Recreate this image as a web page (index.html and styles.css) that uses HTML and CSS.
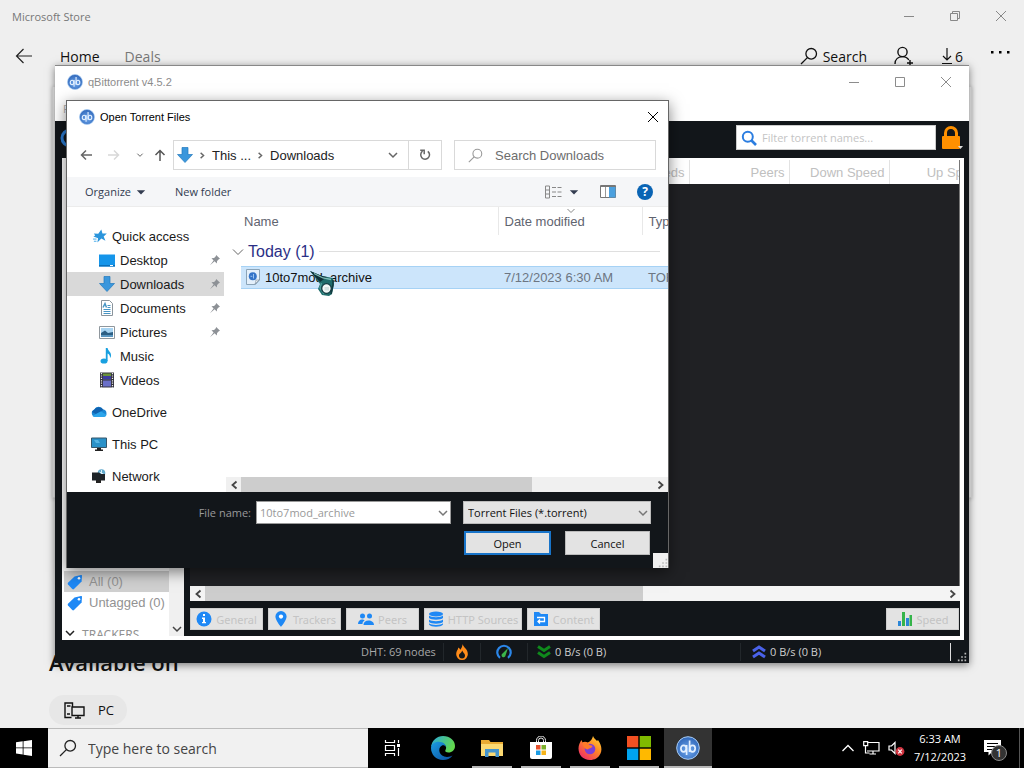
FILE: index.html
```html
<!DOCTYPE html>
<html lang="en">
<head>
<meta charset="utf-8">
<title>Open Torrent Files</title>
<link rel="stylesheet" href="styles.css">
</head>
<body>
<svg class="defs" aria-hidden="true">
  <defs>
    <radialGradient id="qbg" cx="50%" cy="60%" r="60%"><stop offset="0" stop-color="#6fa8ee"/><stop offset="1" stop-color="#2f66b8"/></radialGradient>
    <symbol id="qb" viewBox="0 0 24 24">
      <circle cx="12" cy="12" r="11.3" fill="url(#qbg)" stroke="#a9cdf5" stroke-width="1"/>
      <g fill="none" stroke="#e3f0ff" stroke-width="1.7"><ellipse cx="7.6" cy="12.6" rx="2.7" ry="3.3"/><path d="M10.6 9v10M13.6 4.6V16"/><ellipse cx="16.5" cy="12.6" rx="2.7" ry="3.3"/></g>
    </symbol>
    <symbol id="close" viewBox="0 0 12 12"><path d="M1 1l10 10M11 1L1 11" fill="none" stroke="currentColor"/></symbol>
    <symbol id="min" viewBox="0 0 12 12"><path d="M1 6.5h10" fill="none" stroke="currentColor"/></symbol>
    <symbol id="max" viewBox="0 0 12 12"><path d="M1.500 1.500h9v9h-9z" fill="none" stroke="currentColor"/></symbol>
    <symbol id="restore" viewBox="0 0 12 12"><path d="M1.500 3.500h7v7h-7zM3.500 3.500v-2h7v7h-2" fill="none" stroke="currentColor"/></symbol>
    <symbol id="glass" viewBox="0 0 18 18"><g fill="none" stroke="currentColor" stroke-width="1.300"><circle cx="11.200" cy="6.800" r="5.300"/><path d="M7.400 10.600L1 17"/></g></symbol>
    <symbol id="cdown" viewBox="0 0 12 12"><path d="M2 4l4 4 4-4" fill="none" stroke="currentColor" stroke-width="1.500"/></symbol>
    <symbol id="cleft" viewBox="0 0 12 12"><path d="M8.500 2.500L4.500 6l4 3.500" fill="none" stroke="currentColor" stroke-width="1.800"/></symbol>
    <symbol id="cright" viewBox="0 0 12 12"><path d="M3.500 2.500l4 3.500-4 3.500" fill="none" stroke="currentColor" stroke-width="1.800"/></symbol>
    <symbol id="tri" viewBox="0 0 12 12"><path d="M1 4h10l-5 5z" fill="currentColor"/></symbol>
    <symbol id="pin" viewBox="0 0 12 12"><path d="M7.200 1l3.800 3.800-1.200.4-1.700 1.700-.3 2.600L5.600 7.300 1 11.300 4.600 6.400 2.500 4.200l2.600-.3 1.700-1.700z" fill="#8d9196"/></symbol>
    <symbol id="dl" viewBox="0 0 16 16"><path d="M5 .5h6v7h4.500L8 15.500.5 7.500H5z" fill="#3b97dc" stroke="#2179bd" stroke-width=".7"/></symbol>
    <symbol id="tag" viewBox="0 0 16 16"><path d="M7.500 2.500L14 1c.8 0 1 .4 1 1l-.4 5.500L7 15c-.6.5-1.200.5-1.700 0L1 10.500c-.5-.6-.5-1.200 0-1.800z" fill="#1e88f5"/><circle cx="12" cy="4.300" r="1.300" fill="#fff"/></symbol>
    <symbol id="grip" viewBox="0 0 12 12"><path d="M9 1h2v2H9zM9 5h2v2H9zM5 5h2v2H5zM9 9h2v2H9zM5 9h2v2H5zM1 9h2v2H1z" fill="currentColor"/></symbol>
  </defs>
</svg>

<main class="desktop">
  <section class="store">
    <header class="store-title">
      <span class="store-name">Microsoft Store</span>
      <div class="store-controls">
        <button aria-label="Minimize Store"><svg class="i12"><use href="#min"/></svg></button>
        <button aria-label="Restore Store"><svg class="i12"><use href="#restore"/></svg></button>
        <button aria-label="Close Store"><svg class="i12"><use href="#close"/></svg></button>
      </div>
    </header>
    <nav class="store-nav">
      <button class="back" aria-label="Back"><svg width="18" height="16" viewBox="0 0 18 16"><path d="M8.500 1L1.500 8l7 7M1.500 8H17" fill="none" stroke="#222" stroke-width="1.200"/></svg></button>
      <a href="#home" class="current">Home</a>
      <a href="#deals">Deals</a>
      <div class="store-tools">
        <button class="tool"><svg width="18" height="18"><use href="#glass"/></svg>Search</button>
        <button class="tool" aria-label="Account"><svg width="20" height="20" viewBox="0 0 20 20"><g fill="none" stroke="#111" stroke-width="1.400"><circle cx="8.500" cy="6" r="4.600"/><path d="M1 18c0-5 3.500-7.400 7.500-7.400 2.800 0 5 1.200 6.300 3.400M16 14v6M13 17h6"/></g></svg></button>
        <button class="tool tight"><svg width="12" height="18" viewBox="0 0 12 18"><path d="M6 1v12M2 9l4 4 4-4M1 16.500h10" fill="none" stroke="#111" stroke-width="1.200"/></svg>6</button>
        <button class="tool more" aria-label="More"><svg width="20" height="6" viewBox="0 0 20 6"><path d="M1 2h2.500v2.500H1zM9 2h2.500v2.500H9zM17 2h2.500v2.500H17z"/></svg></button>
      </div>
    </nav>
    <div class="store-card"></div>
    <h2 class="available">Available on</h2>
    <span class="pill"><svg width="21" height="17" viewBox="0 0 21 17"><g fill="none" stroke="#111" stroke-width="1.400"><path d="M7.500 15.500H1V1h7.500v4M3 4h3.500M3 12h3M8 5h12v8.500H8zM14 13.500V16M11 16h6"/></g></svg>PC</span>
  </section>

  <section class="qb-window" aria-label="qBittorrent">
    <header class="qb-title">
      <svg width="16" height="16"><use href="#qb"/></svg>
      <span>qBittorrent v4.5.2</span>
      <div class="qb-controls">
        <button aria-label="Minimize"><svg class="i12"><use href="#min"/></svg></button>
        <button aria-label="Maximize"><svg class="i12"><use href="#max"/></svg></button>
        <button aria-label="Close qBittorrent"><svg class="i12"><use href="#close"/></svg></button>
      </div>
    </header>
    <div class="qb-menu">File</div>
    <div class="qb-toolbar">
      <svg width="20" height="20" viewBox="0 0 20 20"><circle cx="10" cy="10" r="8" fill="none" stroke="#2b7cd3" stroke-width="3"/></svg>
      <label class="filter"><svg width="16" height="16" viewBox="0 0 16 16"><g fill="none" stroke="#2b7de0"><circle cx="6.800" cy="6.800" r="5" stroke-width="2"/><path d="M10.500 10.500L15 15" stroke-width="2.600"/></g></svg><input type="text" placeholder="Filter torrent names..." aria-label="Filter torrent names"></label>
      <button class="lock" aria-label="Lock"><svg width="22" height="24" viewBox="0 0 22 24"><path d="M4.500 11V7a5.500 5.500 0 0 1 11 0v4" fill="none" stroke="#ff9000" stroke-width="3"/><rect x="1" y="10" width="18" height="13" rx="1" fill="#ff9000"/><path d="M17 20h5l-2.500 3z" fill="#ddd"/></svg></button>
    </div>
    <div class="qb-body">
      <aside class="qb-side">
        <div class="qb-tags">
          <div class="tag on"><svg width="16" height="16"><use href="#tag"/></svg>All (0)</div>
          <div class="tag"><svg width="16" height="16"><use href="#tag"/></svg>Untagged (0)</div>
          <div class="trackers"><svg width="12" height="12"><use href="#cdown"/></svg>TRACKERS</div>
        </div>
        <div class="vbar"><svg width="12" height="12"><use href="#cdown"/></svg></div>
      </aside>
      <div class="qb-main">
        <div class="torrents">
          <table>
            <colgroup><col class="c-name"><col class="c-n"><col class="c-n"><col class="c-n"><col class="c-n"></colgroup>
            <thead><tr><th></th><th>Seeds</th><th>Peers</th><th>Down Speed</th><th>Up Speed</th></tr></thead>
          </table>
        </div>
        <div class="hbar qb-hbar"><span class="cap"><svg width="12" height="12"><use href="#cleft"/></svg></span><span class="thumb"></span><span class="track"></span><span class="cap"><svg width="12" height="12"><use href="#cright"/></svg></span></div>
        <div class="tabs">
          <button class="tab"><svg width="16" height="16" viewBox="0 0 16 16"><circle cx="8" cy="8" r="7.500" fill="#1e88f5"/><path d="M7 3h2v2H7zM6 6.500h3V11h1v1.300H6V11h1V8H6z" fill="#fff"/></svg>General</button>
          <button class="tab"><svg width="16" height="16" viewBox="0 0 16 16"><path d="M8 0a5.600 5.600 0 0 1 5.600 5.600C13.600 9.500 8 16 8 16S2.400 9.500 2.400 5.600A5.600 5.600 0 0 1 8 0z" fill="#1e88f5"/><circle cx="8" cy="5.600" r="2.100" fill="#fff"/></svg>Trackers</button>
          <button class="tab"><svg width="16" height="16" viewBox="0 0 16 16"><g fill="#1e88f5"><circle cx="4.500" cy="5" r="2.500"/><circle cx="11.500" cy="5" r="2.500"/><path d="M0 13c0-3 2-4.500 4-4.500 1.200 0 2 .4 2.600 1C5 10.500 4.500 11.500 4.500 13zM5.500 14c0-3 2-4.500 5-4.500s5.500 1.500 5.500 4.500z"/></g></svg>Peers</button>
          <button class="tab wide"><svg width="16" height="16" viewBox="0 0 16 16"><g fill="#1e88f5"><ellipse cx="8" cy="3" rx="7" ry="2.600"/><path d="M1 4.500c2 2.200 12 2.200 14 0v2.500c-2 2.200-12 2.200-14 0zM1 8.500c2 2.200 12 2.200 14 0V11c-2 2.200-12 2.200-14 0zM1 12.300c2 2.200 12 2.200 14 0v1.200c-2 3-12 3-14 0z"/></g></svg>HTTP Sources</button>
          <button class="tab"><svg width="16" height="16" viewBox="0 0 16 16"><path d="M1 1h5l2 2h7v12H1z" fill="#1e88f5"/><path d="M4 6.500h7.500v4H5M7 8.500l-2 2 2 2" fill="none" stroke="#fff" stroke-width="1.300"/></svg>Content</button>
          <button class="tab speed"><svg width="16" height="16" viewBox="0 0 16 16"><path d="M1 10h3v5H1zM9 7h3v8H9z" fill="#2b86d8"/><path d="M5 1h3v14H5zM12.500 4H15v11h-2.500z" fill="#35b44a"/></svg>Speed</button>
        </div>
      </div>
    </div>
    <footer class="qb-status">
      <span class="dht">DHT: 69 nodes</span>
      <span class="cell"><svg width="16" height="16" viewBox="0 0 16 16"><path d="M8.500 0c.5 3 5.300 5 5.300 9.700A5.800 5.800 0 0 1 8 16a5.800 5.800 0 0 1-5.800-6.200C2.200 7 4 6 4.300 3.500c1 .5 1.700 1.300 2 2.300C7.500 4 8.500 2.500 8.500 0z" fill="#ff8c1a"/><path d="M8.300 6.500c.3 2 2.700 2.700 2.700 5a3 3 0 0 1-6 0c0-2 2.500-2.500 3.300-5z" fill="#14181b"/></svg></span>
      <span class="cell"><svg width="16" height="16" viewBox="0 0 16 16"><path d="M4 13.800A6.700 6.700 0 1 1 12 13.800" fill="none" stroke="#2b86e8" stroke-width="2.200"/><path d="M12 4L9.500 11.500a2 2 0 1 1-3-2z" fill="#3cb54a"/></svg></span>
      <span class="cell down"><svg width="14" height="16" viewBox="0 0 14 16"><path d="M1 2.500l6 4 6-4M1 8.500l6 4 6-4" fill="none" stroke="#0f8a1c" stroke-width="3"/></svg>0 B/s (0 B)</span>
      <span class="cell up"><svg width="14" height="16" viewBox="0 0 14 16"><path d="M1 7l6-4 6 4M1 13l6-4 6 4" fill="none" stroke="#4a62ea" stroke-width="3"/></svg>0 B/s (0 B)</span>
      <svg class="qb-grip" width="10" height="10"><use href="#grip"/></svg>
    </footer>
  </section>

  <section class="dialog" role="dialog" aria-label="Open Torrent Files">
    <header class="dlg-title">
      <svg width="16" height="16"><use href="#qb"/></svg>
      <span>Open Torrent Files</span>
      <button aria-label="Close"><svg class="i12"><use href="#close"/></svg></button>
    </header>
    <div class="address">
      <div class="history">
        <button aria-label="Back"><svg width="12" height="12" viewBox="0 0 12 12"><path d="M6 1.500L1.500 6 6 10.500M1.500 6H12" fill="none" stroke="#666" stroke-width="1.500"/></svg></button>
        <button aria-label="Forward"><svg width="12" height="12" viewBox="0 0 12 12"><path d="M6 1.500L10.500 6 6 10.500M10.500 6H0" fill="none" stroke="#d8d8d8" stroke-width="1.500"/></svg></button>
        <button aria-label="Recent"><svg width="8" height="8"><use href="#cdown" color="#666"/></svg></button>
        <button aria-label="Up"><svg width="12" height="12" viewBox="0 0 12 12"><path d="M1.500 6L6 1.500 10.500 6M6 1.500V12" fill="none" stroke="#555" stroke-width="1.500"/></svg></button>
      </div>
      <div class="crumbs">
        <svg width="16" height="16"><use href="#dl"/></svg>
        <svg width="9" height="9"><use href="#cright"/></svg>
        <a href="#pc">This ...</a>
        <svg width="9" height="9"><use href="#cright"/></svg>
        <a href="#downloads">Downloads</a>
        <button class="crumb-open" aria-label="Previous locations"><svg width="12" height="12"><use href="#cdown"/></svg></button>
      </div>
      <button class="refresh" aria-label="Refresh"><svg width="12" height="12" viewBox="0 0 12 12"><path d="M8.800 2.300A4.400 4.400 0 1 1 3.600 2.200" fill="none" stroke="#666" stroke-width="1.500"/><path d="M1.200 1.300h4v4" fill="none" stroke="#666" stroke-width="1.500"/></svg></button>
      <label class="dlg-search"><svg width="15" height="15"><use href="#glass"/></svg><input type="text" placeholder="Search Downloads" aria-label="Search Downloads"></label>
    </div>
    <div class="commands">
      <button>Organize<svg width="10" height="10"><use href="#tri"/></svg></button>
      <button>New folder</button>
      <div class="views">
        <button aria-label="Change view"><svg width="18" height="14" viewBox="0 0 18 14"><path d="M1.500 1v12h4V1zM1.500 5h4M1.500 9h4" fill="none" stroke="#888"/><path d="M8 2.500h4M8 7h4M8 11.500h4M13.500 2.500h4M13.500 7h4M13.500 11.500h4" stroke="#888"/></svg><svg width="10" height="10"><use href="#tri"/></svg></button>
        <button aria-label="Preview pane"><svg width="16" height="13" viewBox="0 0 16 13"><path d="M.5.500h15v12H.5z" fill="#fff" stroke="#777"/><path d="M.5 1.500h15" stroke="#777"/><path d="M5.500 2v10" stroke="#999"/><path d="M9 2h6.500v10.500H9z" fill="#4ba0de"/></svg></button>
        <button class="help" aria-label="Help">?</button>
      </div>
    </div>
    <div class="browse">
      <nav class="places">
        <a href="#q" class="root"><svg width="14" height="14" viewBox="0 0 16 16"><path d="M9.500.5l1.300 4.700 5-.2-3.600 3.500 2 5-4.700-2.600L5 15.500l.8-5L.5 8.500l2-1-1.500-2.500 5 .5z" fill="#2b95dc"/><path d="M0 11.500h4M1 14h3" stroke="#35a3e8"/></svg>Quick access</a>
        <a href="#q1"><svg width="16" height="13" viewBox="0 0 16 13"><path d="M0 .5h16v12H0z" fill="#1595ea"/><path d="M0 11h16v1.500H0z" fill="#0b6fb8"/><path d="M11 11.500h3" stroke="#fff"/></svg>Desktop<svg class="pin" width="12" height="12"><use href="#pin"/></svg></a>
        <a href="#q2" class="selected"><svg width="16" height="16"><use href="#dl"/></svg>Downloads<svg class="pin" width="12" height="12"><use href="#pin"/></svg></a>
        <a href="#q3"><svg width="16" height="16" viewBox="0 0 16 16"><path d="M2.500.500h8l3 3v12h-11z" fill="#fff" stroke="#8a949c"/><path d="M4.500 9.500h7M4.500 11.500h7M4.500 13.500h7M8.500 5.500h3M8.500 7.500h3" stroke="#4694c4"/><path d="M4 7.500l2-4 1.500 4" fill="none" stroke="#4694c4" stroke-width="1.500"/></svg>Documents<svg class="pin" width="12" height="12"><use href="#pin"/></svg></a>
        <a href="#q4"><svg width="16" height="13" viewBox="0 0 16 13"><path d="M.5.500h15v12H.5z" fill="#fff" stroke="#8f979d"/><path d="M2 2h12v5H2z" fill="#a8d4f2"/><path d="M2 7l4-2.500L9 7l5-1v5H2z" fill="#2c5f84"/><path d="M2 9h12v2H2z" fill="#5a96c0"/></svg>Pictures<svg class="pin" width="12" height="12"><use href="#pin"/></svg></a>
        <a href="#q5"><svg width="16" height="16" viewBox="0 0 16 16"><ellipse cx="5" cy="13" rx="3.500" ry="2.600" fill="#18a0e0"/><path d="M6.800 0h1.800c.3 3 4 4 3.400 8-.2 1.300-1 2-1 2s.5-3.400-2.400-4.500V13H6.800z" fill="#18a0e0"/></svg>Music</a>
        <a href="#q6"><svg width="16" height="16" viewBox="0 0 16 16"><path d="M1 .5h14v15H1z" fill="#33323d"/><path d="M4 1.500h8v6H4z" fill="#69913a"/><path d="M4 4h8v3.500H4z" fill="#3c3aa0"/><path d="M4 8.500h8v6H4z" fill="#6a6fc8"/><path d="M2.500 1v15M13.500 1v15" stroke="#eee" stroke-width="1.200" stroke-dasharray="1.200 1.200"/></svg>Videos</a>
        <a href="#q7" class="root gap"><svg width="16" height="16" viewBox="0 0 16 16"><path d="M4 13a4 4 0 0 1-.8-7.600A5 5 0 0 1 12 5.500a3.800 3.800 0 0 1 .5 7.500z" fill="#1a86d4"/><path d="M3.500 5.500A5 5 0 0 1 12 5.500l.8.300L5 10 .8 8z" fill="#0f62b0"/><path d="M5 10l5-2.500 5.600 3.200A3.400 3.400 0 0 1 12.500 13H4a4 4 0 0 1-2.500-1z" fill="#2ba4ea"/></svg>OneDrive</a>
        <a href="#q8" class="root gap"><svg width="16" height="14" viewBox="0 0 16 14"><path d="M.5 1h15v9.500H.5z" fill="#2a91c8" stroke="#35566a"/><path d="M6 11h4v1.500h2V14H4v-1.500h2z" fill="#222"/><path d="M3 3h4l2 3H5z" fill="#56b4e2"/></svg>This PC</a>
        <a href="#q9" class="root gap"><svg width="16" height="14" viewBox="0 0 16 14"><circle cx="10.500" cy="4" r="3.800" fill="#62aacd"/><path d="M8.500 3l4 2M10.500 1v5" stroke="#d8eef8"/><path d="M1 3.500h7l2 1.500h4v6.500H1z" fill="#1e2328"/><path d="M5 11h5v3H5z" fill="#222"/></svg>Network</a>
      </nav>
      <div class="files">
        <table>
          <colgroup><col class="f-pad"><col class="f-name"><col class="f-date"><col></colgroup>
          <thead><tr><th></th><th>Name</th><th><svg class="sort" width="10" height="6" viewBox="0 0 10 6"><path d="M1.500 1L5 4.500 8.500 1" fill="none" stroke="#888"/></svg>Date modified</th><th>Type</th></tr></thead>
          <tbody>
            <tr><th colspan="4" class="group"><div><svg width="12" height="12" viewBox="0 0 12 12"><path d="M1 3.500L6 8.500l5-5" fill="none" stroke="#666"/></svg>Today (1)<i></i></div></th></tr>
            <tr class="file"><td></td><td><div><svg width="16" height="16" viewBox="0 0 16 16"><path d="M1.500.500h13v10.500l-4 4.500h-9z" fill="#e4f0fb" stroke="#8ba4b8"/><path d="M14.500 10.500c-1 .8-2.600.6-3.500.5 0 1.500-.5 3-1 4z" fill="#fff" stroke="#7e91a0" stroke-width=".7"/><circle cx="7.800" cy="7.300" r="4" fill="#3474c8"/><path d="M5.500 7.300h1.800M8.500 5v4.500" stroke="#9cc4f0"/></svg>10to7mod_archive</div></td><td>7/12/2023 6:30 AM</td><td>TORRENT File</td></tr>
          </tbody>
        </table>
        <div class="hbar"><span class="cap"><svg width="12" height="12"><use href="#cleft"/></svg></span><span class="thumb"></span><span class="track"></span><span class="cap"><svg width="12" height="12"><use href="#cright"/></svg></span></div>
      </div>
    </div>
    <footer class="dlg-footer">
      <label for="fname">File name:</label>
      <div class="combo"><input id="fname" type="text" value="10to7mod_archive"><svg width="12" height="12"><use href="#cdown"/></svg></div>
      <div class="choice"><select aria-label="File type"><option>Torrent Files (*.torrent)</option></select><svg width="12" height="12"><use href="#cdown"/></svg></div>
      <div class="actions"><button class="primary">Open</button><button>Cancel</button></div>
      <span class="dlg-grip"><svg width="10" height="10"><use href="#grip"/></svg></span>
    </footer>
  </section>

  <svg class="pointer" width="28" height="28" viewBox="0 0 28 28" aria-hidden="true">
    <path d="M1 1l12 5 11 2 1 6-2 10-3 2-7-1-4-6 2-5z" fill="#1f6c6b"/>
    <path d="M1 1l12 5 5 1-7 5z" fill="#0f2f36"/>
    <path d="M5 3.500l9 4.500 8 1.500" fill="none" stroke="#7fbdb7" stroke-width="1.300"/>
    <path d="M12.500 13l-1.500 5 4 6" fill="none" stroke="#4a9b98" stroke-width="1.500"/>
    <path d="M24 10v5l-2 9" fill="none" stroke="#123a40" stroke-width="1.500"/>
    <circle cx="17.500" cy="18.500" r="4.800" fill="#f3f8f7" stroke="#123a40" stroke-width="1.300"/>
    <path d="M15.500 17h4.500v3.500h-4.500z" fill="#d3e2e0"/>
  </svg>

  <footer class="taskbar">
    <button class="start" aria-label="Start"><svg width="16" height="16" viewBox="0 0 16 16"><path d="M0 2.300l6.700-1v6.200H0zM7.500 1.200L16 0v7.500H7.500zM0 8.300h6.700v6.300l-6.700-1zM7.500 8.300H16V16l-8.500-1.200z" fill="#fff"/></svg></button>
    <label class="task-search"><svg width="18" height="18"><use href="#glass"/></svg><input type="text" placeholder="Type here to search" aria-label="Type here to search"></label>
    <div class="apps">
      <button class="view" aria-label="Task view"><svg width="17" height="16" viewBox="0 0 17 16"><path d="M1.500 0v2.500h9V0M1.500 5.500h9v5h-9zM1.500 16v-2.500h9V16M14.500 0v3M14.500 8v8" fill="none" stroke="#fff" stroke-width="1.200"/><path d="M13 4h3v3h-3z" fill="#fff"/></svg></button>
      <button aria-label="Edge"><svg width="24" height="24" viewBox="0 0 24 24"><defs><linearGradient id="e1" x1="0" y1="0" x2="1" y2=".4"><stop offset="0" stop-color="#28a8e0"/><stop offset="1" stop-color="#62d84e"/></linearGradient><linearGradient id="e2" x1="0" y1="0" x2="1" y2="1"><stop offset="0" stop-color="#1b9de2"/><stop offset="1" stop-color="#0c4fa0"/></linearGradient></defs><path d="M0 11C1 4 6 0 12 0c7 0 12 4.500 12 10 0 4-3 6.500-6.500 6.500-2.500 0-4-1-3-2.500 1.500-2.500.5-6-4-6C5.500 8 1 9 0 11z" fill="url(#e1)"/><path d="M0 12c0-4 3.500-6.300 7.500-6.300 5 0 7.500 2.800 7.500 5.300-1-2-3-2-4-1.500-5 2.500-3 11.500 5 11.500 2.500 0 4-.8 5.500-1.500C19.500 22.500 16 24 12 24 5 24 0 18.500 0 12z" fill="url(#e2)"/></svg></button>
      <button class="open" aria-label="File Explorer"><svg width="22" height="19" viewBox="0 0 22 19"><path d="M0 1h8l1.500 2H22v14H0z" fill="#e9ab33"/><path d="M0 5h22v12H0z" fill="#fbd972"/><path d="M4 10h14v8h-3.500v-4.500h-7V18H4z" fill="#4494cd"/></svg></button>
      <button class="open" aria-label="Microsoft Store"><svg width="24" height="24" viewBox="0 0 24 24"><path d="M7.500 7V4.500a4.500 4.500 0 0 1 9 0V7M9.500 7V4.500a2.500 2.500 0 0 1 5 0V7" fill="none" stroke="#eee"/><path d="M1 6h22v15a2 2 0 0 1-2 2H3a2 2 0 0 1-2-2z" fill="#fff"/><path d="M7 9h4.500v4.500H7z" fill="#e8502c"/><path d="M12.500 9H17v4.500h-4.500z" fill="#7cb02c"/><path d="M7 14.500h4.500V19H7z" fill="#1c9ce4"/><path d="M12.500 14.500H17V19h-4.500z" fill="#f6b41a"/></svg></button>
      <button class="open" aria-label="Firefox"><svg width="24" height="24" viewBox="0 0 24 24"><defs><linearGradient id="ff" x1="1" y1="0" x2=".2" y2="1"><stop offset="0" stop-color="#ffe03c"/><stop offset=".45" stop-color="#ff8a24"/><stop offset="1" stop-color="#ef2a68"/></linearGradient></defs><path d="M15 0c1 3 3 3.500 4 5l1-1c3 4 4.500 9 2.500 13.500C20.500 22 16.500 24 12 24 5 24 .5 19 .5 12.500.5 9 2 6 3.500 4l1 2.500C6 5.500 8 5.500 9.500 6.500 11 6 14 4.500 15 0z" fill="url(#ff)"/><circle cx="12" cy="13" r="5.300" fill="#7b3fd6"/><path d="M4.500 6.500C8 5 10 7 11.500 9c1.500.5 3 .5 3 1.500-1 2-4 1.500-4.500 3-3 0-5-3-5.500-7z" fill="#ff7a2a"/></svg></button>
      <button class="open" aria-label="Microsoft"><svg width="24" height="24" viewBox="0 0 24 24"><path d="M0 0h11.300v11.300H0z" fill="#f25022"/><path d="M12.700 0H24v11.300H12.700z" fill="#7fba00"/><path d="M0 12.700h11.300V24H0z" fill="#00a4ef"/><path d="M12.700 12.700H24V24H12.700z" fill="#ffb900"/></svg></button>
      <button class="open active" aria-label="qBittorrent"><svg width="24" height="24"><use href="#qb"/></svg></button>
    </div>
    <div class="tray">
      <svg width="14" height="10" viewBox="0 0 14 10"><path d="M1.500 8L7 2.500 12.500 8" fill="none" stroke="#fff" stroke-width="1.300"/></svg>
      <svg width="17" height="14" viewBox="0 0 17 14"><path d="M4 1.500h12v8.500H4M10 10v3M6.500 13H13M2.500 5v7h4" fill="none" stroke="#fff" stroke-width="1.200"/><path d="M.7.700h4v4h-4z" fill="#000" stroke="#fff" stroke-width="1.200"/></svg>
      <svg width="17" height="15" viewBox="0 0 17 15"><path d="M1 5h2.500L7 1.500v11L3.500 9H1z" fill="none" stroke="#fff" stroke-width="1.200"/><circle cx="12" cy="10.500" r="4.400" fill="#d13440"/><path d="M10.200 8.700l3.600 3.600M13.800 8.700l-3.600 3.600" stroke="#fff" stroke-width="1.200"/></svg>
      <div class="clock"><time>6:33 AM</time><time>7/12/2023</time></div>
      <div class="notes"><svg width="17" height="16" viewBox="0 0 17 16"><path d="M0 0h17v12H8l-3.500 3.500V12H0z" fill="#fff"/><path d="M3 3.500h11M3 6.500h11M3 9.500h7" stroke="#000"/></svg><b>1</b></div>
      <i class="peek"></i>
    </div>
  </footer>
</main>
</body>
</html>
```

FILE: styles.css
```css
* { box-sizing: border-box; }
body { margin: 0; font-family: "Open Sans", "Noto Sans", sans-serif; color: #111; }
svg { display: block; flex: none; }
button, input, select { font: inherit; color: inherit; border: 0; padding: 0; margin: 0; background: none; border-radius: 0; outline: 0; }
a { color: inherit; text-decoration: none; }
.defs { position: absolute; width: 0; height: 0; }
.i12 { width: 12px; height: 12px; }

.desktop { position: relative; display: flex; flex-direction: column; height: 100vh; min-height: 700px; overflow: hidden; background: #efefef; }

/* Store */
.store { flex: 1; display: flex; flex-direction: column; min-height: 0; }
.store-title { display: flex; align-items: center; height: 32px; padding-left: 12px; font-size: 11px; color: #777; }
.store-controls { display: flex; margin-left: auto; color: #888; }
.store-controls button { width: 46px; display: grid; place-items: center; }
.store-nav { display: flex; align-items: center; height: 48px; font-size: 14px; color: #777; }
.store-nav .back { width: 48px; display: grid; place-items: center; }
.store-nav a { margin: 0 13px 0 12px; }
.store-nav .current { color: #111; }
.store-tools { display: flex; align-items: center; gap: 27px; margin-left: auto; padding-right: 14px; color: #111; }
.tool { display: flex; align-items: center; gap: 5px; }
.tool.tight { gap: 2px; }
.tool.more { padding-bottom: 8px; }
.store-card { flex: 1; margin: 6px 52px 0; background: #f4f4f4; border: 1px solid #e2e2e2; box-shadow: 0 1px 4px rgba(0,0,0,.2); }
.available { margin: 150px 0 19px 49px; font-size: 22px; line-height: 28px; font-weight: 600; }
.pill { display: flex; align-items: center; align-self: flex-start; gap: 13px; height: 30px; margin: 0 0 3px 49px; padding: 0 13px 0 15px; border-radius: 15px; background: #e7e7e7; font-size: 13px; }

/* qBittorrent window */
.qb-window { position: absolute; inset: 65px 55px 105px 55px; display: flex; flex-direction: column; background: #12161a; border-top: 1px solid #888; box-shadow: 0 2px 8px rgba(0,0,0,.5); overflow: hidden; }
.qb-title { display: flex; align-items: center; gap: 5px; height: 31px; padding-left: 12px; background: #fff; font: 11px "Liberation Sans", Arial, sans-serif; color: #8c8c8c; }
.qb-controls { display: flex; margin-left: auto; }
.qb-controls button { width: 46px; display: grid; place-items: center; }
.qb-menu { height: 24px; padding: 4px 8px; background: #fff; font-size: 11px; color: #aaa; }
.qb-toolbar { display: flex; align-items: center; height: 37px; padding: 0 6px 4px 5px; }
.filter { display: flex; align-items: center; gap: 5px; width: 200px; height: 25px; margin-left: auto; padding: 0 4px; background: #fff; border: 1px solid #ccc; }
.filter input { flex: 1; min-width: 0; font-size: 11px; }
.filter input::placeholder { color: #c4c4c4; opacity: 1; }
.lock { margin-left: 5px; }
.qb-body { flex: 1; min-height: 0; display: flex; margin: 0 5px 0 7px; border: solid #fff; border-width: 2px 4px 4px 1px; background: #12161a; }
.qb-side { display: flex; width: 121px; background: #fff; overflow: hidden; }
.qb-tags { flex: 1; min-width: 0; display: flex; flex-direction: column; justify-content: flex-end; padding-left: 1px; font: 13px "Liberation Sans", Arial, sans-serif; color: #929292; white-space: nowrap; }
.tag { display: flex; align-items: center; gap: 6px; height: 21px; padding-left: 3px; }
.tag.on { background: #d0d0d0; }
.trackers { display: flex; align-items: flex-start; gap: 6px; height: 9px; margin-top: 14px; overflow: hidden; font: 12px/16px "Noto Sans", sans-serif; }
.trackers svg { color: #222; }
.vbar { width: 15px; background: #f0f0f0; display: flex; align-items: flex-end; justify-content: center; padding-bottom: 1px; color: #444; }
.qb-main { flex: 1; min-width: 0; display: flex; flex-direction: column; margin-left: 6px; }
.torrents { flex: 1; min-height: 0; overflow: hidden; background: #202124; border-right: 1px solid #777; }
.torrents table { width: 799px; table-layout: fixed; border-collapse: collapse; background: #fff; }
.c-name { width: 399px; }
.c-n { width: 100px; }
.torrents th { height: 24px; padding: 0 4px; text-align: right; border-right: 1px solid #e2e2e2; font: 13px "Liberation Sans", Arial, sans-serif; color: #c0c0c0; }
.hbar { display: flex; height: 15px; background: #f0f0f0; color: #444; }
.cap { width: 15px; display: grid; place-items: center; }
.thumb { flex: 290; background: #cdcdcd; }
.track { flex: 121; }
.qb-hbar { background: #f4f4f4; }
.qb-hbar .thumb { flex: 437; }
.qb-hbar .track { flex: 302; }
.tabs { display: flex; gap: 5px; padding: 7px 1px 6px 0; }
.tab { display: flex; align-items: center; justify-content: center; gap: 4px; width: 73px; height: 22px; background: #e3e3e3; border: 1px solid #cfcfcf; font: 11px "Noto Sans", sans-serif; color: #c4c4c4; white-space: nowrap; }
.tab.wide { width: 98px; }
.tab.speed { margin-left: auto; }
.qb-status { position: relative; display: flex; align-items: center; height: 23px; padding-left: 306px; font-size: 11px; color: #cfcfcf; }
.dht { width: 82px; color: #a9a9a9; white-space: nowrap; }
.cell { display: flex; align-items: center; gap: 4px; height: 18px; padding: 0 10px; border-left: 1px solid #22272b; }
.dht + .cell + .cell { padding: 0 15px; }
.cell.down { width: 213px; padding: 0 9px; }
.cell.up { flex: 1; padding: 0 11px; margin-right: 18px; border-right: 1px solid #ddd; }
.qb-grip { position: absolute; right: 2px; bottom: 1px; color: #bbb; }

/* Open dialog */
.dialog { position: absolute; left: 66px; top: 100px; width: 603px; height: 468px; display: flex; flex-direction: column; background: #fff; border: solid #666; border-width: 1px 1px 0 1px; box-shadow: 0 4px 14px rgba(0,0,0,.5); font: 13px "Liberation Sans", Arial, sans-serif; }
.dlg-title { display: flex; align-items: center; gap: 5px; height: 32px; padding: 0 9px 0 12px; font-size: 11px; color: #000; }
.dlg-title button { margin-left: auto; }
.address { display: flex; align-items: center; height: 44px; padding: 0 12px 0 13px; }
.history { display: flex; align-items: center; width: 93px; gap: 16px; }
.history button:nth-child(3) { margin-right: -6px; }
.crumbs { flex: 1; display: flex; align-items: center; gap: 5px; height: 30px; padding: 0 3px; border: 1px solid #d9d9d9; color: #222; white-space: nowrap; }
.crumbs svg { color: #666; }
.crumb-open { margin-left: auto; padding-right: 6px; }
.refresh { width: 33px; height: 30px; display: grid; place-items: center; border: 1px solid #d9d9d9; border-left: 0; }
.dlg-search { display: flex; align-items: center; gap: 12px; width: 202px; height: 30px; margin-left: 12px; padding: 0 13px; border: 1px solid #d9d9d9; color: #999; }
.dlg-search input { flex: 1; min-width: 0; }
.dlg-search input::placeholder { color: #6d6d6d; opacity: 1; }
.commands { display: flex; align-items: center; gap: 29px; height: 30px; padding: 0 15px 0 18px; background: #f5f6f8; border-bottom: 1px solid #ececec; font-family: "Open Sans", sans-serif; font-size: 11px; color: #333c50; }
.commands button { display: flex; align-items: center; gap: 5px; white-space: nowrap; }
.views { display: flex; align-items: center; gap: 21px; margin-left: auto; }
.views button:first-child { gap: 7px; }
.commands .help { justify-content: center; width: 16px; height: 16px; border-radius: 8px; background: #0a64b4; color: #fff; font-weight: 700; font-size: 12px; line-height: 16px; }
.browse { flex: 1; min-height: 0; display: flex; }
.places { width: 157px; margin-right: 2px; padding-top: 17px; }
.places a { display: flex; align-items: center; gap: 5px; height: 24px; padding: 0 3px 0 32px; color: #1a1a1a; white-space: nowrap; }
.places .root { padding-left: 24px; }
.places a:first-child { padding-left: 26px; }
.places .gap { margin-top: 8px; }
.places .selected { background: #d9d9d9; }
.places .pin { margin-left: auto; }
.files { flex: 1; min-width: 0; display: flex; flex-direction: column; justify-content: space-between; overflow: hidden; }
.files table { width: 100%; table-layout: fixed; border-collapse: collapse; }
.f-pad { width: 15px; }
.f-name { width: 257px; }
.f-date { width: 144px; }
.files th, .files td { padding: 0; text-align: left; font-weight: 400; white-space: nowrap; overflow: hidden; }
.files thead th { height: 28px; padding: 0 0 0 6px; color: #5f6470; border-right: 1px solid #e8e8e8; position: relative; }
.files thead th:nth-child(2) { padding-left: 3px; }
.files thead th:first-child, .files thead th:last-child { border-right: 0; }
.sort { position: absolute; left: 67px; top: 1px; }
.files .group { height: 31px; padding-top: 3px; color: #2b2f86; font-size: 16px; }
.group div { display: flex; align-items: center; gap: 4px; padding: 0 8px 0 6px; }
.group i { flex: 1; height: 1px; background: #dfdfdf; }
.file td { height: 22px; color: #6d7682; padding-left: 6px; }
.file td + td { background: #cce5fb; border: solid #a6d2f5; border-width: 1px 0; }
.file td:nth-child(2) { color: #111; padding-left: 4px; }
.file div { display: flex; align-items: center; gap: 4px; }
.dlg-footer { position: relative; display: grid; grid-template-columns: 189px 195px 188px; column-gap: 12px; row-gap: 7px; align-content: start; align-items: center; height: 76px; padding-top: 9px; background: #12161a; font: 11px "Open Sans", sans-serif; }
.dlg-footer { grid-template-columns: 184px 195px 188px; column-gap: 0; }
.dlg-footer label { justify-self: end; color: #9a9a9a; }
.combo, .choice { display: flex; align-items: center; position: relative; height: 23px; background: #fff; border: 1px solid #999; color: #777; }
.dlg-footer { grid-template-columns: 184px 195px 188px; column-gap: 0; }
.combo { margin-left: 5px; margin-right: -5px; }
.choice { margin-left: 17px; margin-right: -17px; background: #e3e3e3; border-color: #bbb; }
.combo input { flex: 1; min-width: 0; padding-left: 3px; color: #999; }
.combo svg { margin-right: 1px; }
.choice select { flex: 1; min-width: 0; appearance: none; padding: 0 16px 0 4px; color: #111; }
.choice svg { position: absolute; right: 1px; pointer-events: none; }
.actions { grid-column: 3; display: flex; gap: 14px; margin: 0 -16px 0 18px; }
.actions button { flex: 1; height: 24px; background: #e3e3e3; border: 1px solid #bbb; color: #111; }
.actions .primary { border: 2px solid #1874c9; }
.dlg-grip { position: absolute; right: 0; bottom: 0; width: 15px; height: 15px; display: grid; place-items: end; background: #f0f0f0; color: #bbb; }
.pointer { position: absolute; left: 309px; top: 270px; }

/* Taskbar */
.taskbar { position: relative; display: flex; height: 40px; background: #000; color: #fff; }
.start { width: 48px; display: grid; place-items: center; }
.task-search { display: flex; align-items: center; gap: 11px; width: 320px; padding-left: 11px; background: #f1f1f1; border: solid #bbb; border-width: 1px 0; color: #222; font-size: 14px; }
.task-search input { flex: 1; min-width: 0; }
.task-search input::placeholder { color: #444; opacity: 1; }
.apps { display: flex; gap: 1px; }
.apps button { position: relative; width: 48px; display: grid; place-items: center; }
.apps .view { margin-right: 2px; }
.apps .open::after { content: ""; position: absolute; left: 4px; right: 4px; bottom: 0; height: 2px; background: #b8b8b8; }
.apps .active { background: #333; }
.apps .active::after { left: 0; right: 0; }
.tray { display: flex; align-items: center; gap: 8px; margin-left: auto; }
.clock { display: flex; flex-direction: column; align-items: center; width: 56px; margin-left: -1px; font-size: 11px; line-height: 18px; }
.notes { position: relative; width: 27px; margin-left: 8px; }
.notes b { position: absolute; left: 7px; top: 5px; width: 16px; height: 16px; border: 1px solid #888; border-radius: 8px; background: #333; font-size: 11px; line-height: 14px; text-align: center; font-weight: 400; }
.peek { width: 5px; height: 40px; border-left: 1px solid #555; }
```
